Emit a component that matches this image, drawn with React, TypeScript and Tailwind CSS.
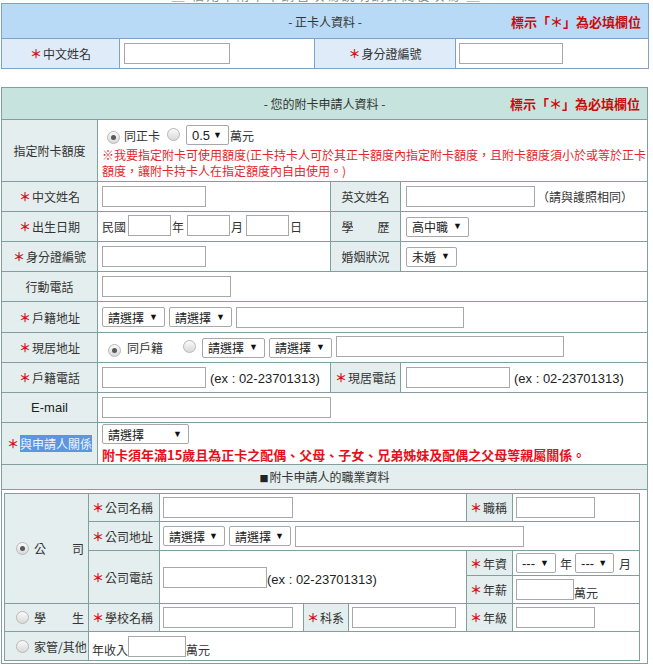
import React from "react";

const cjk = "font-['Noto_Sans_CJK_TC','Noto_Sans_CJK_SC',sans-serif]";
const lat = "font-['Liberation_Sans',Arial,sans-serif]";

function Star() {
  return <span className="text-[#d3141c] text-[12px] font-bold mr-[1px]">＊</span>;
}

function Box({ w }: { w: string }) {
  return <span className={`inline-block shrink-0 h-[21px] border border-[#a8a8a8] bg-white ${w}`} />;
}

function Sel({ label, w, latin }: { label: string; w: string; latin?: boolean }) {
  return (
    <span
      className={`inline-flex shrink-0 items-center justify-between h-[20px] border border-[#a8a8a8] rounded-[2px] bg-white pl-[5px] pr-[6px] text-[#222] ${latin ? `${lat} text-[13px]` : "text-[12px]"} ${w}`}
    >
      <span>{label}</span>
      <span className={`${lat} text-[9px] leading-none text-[#111]`}>▼</span>
    </span>
  );
}

function Radio({ on }: { on?: boolean }) {
  return (
    <span className="inline-flex shrink-0 items-center justify-center w-[13px] h-[13px] rounded-full border border-[#b8b8b8] bg-gradient-to-b from-[#fafafa] to-[#d9d9d9]">
      {on && <span className="w-[5px] h-[5px] rounded-full bg-[#585858]" />}
    </span>
  );
}

function Ex() {
  return <span className={`${lat} text-[13px] text-[#222]`}>(ex : 02-23701313)</span>;
}

const L2 = "border border-[#809f9d] bg-[#e4eeee] text-center p-0";
const C2 = "border border-[#809f9d] bg-white p-0";
const IL = "border border-[#809f9d] bg-[#e4eeee] p-0 pl-[3px] text-left whitespace-nowrap";
const IC = "border border-[#809f9d] bg-white p-0";

export default function App() {
  return (
    <div className={`w-[653px] h-[665px] overflow-hidden bg-white text-[#333] text-[12px] leading-[17px] ${cjk}`}>
      <div className="h-[3px] overflow-hidden flex justify-center">
        <div className="text-[13px] leading-[14px] text-[#888] -mt-[12px] tracking-[2px]">＿ 信用卡附卡申請書填寫說明請詳閱後填寫 ＿</div>
      </div>

      <table className="ml-[1px] w-[647px] table-fixed border-collapse">
        <colgroup>
          <col className="w-[118px]" />
          <col className="w-[195px]" />
          <col className="w-[141px]" />
          <col className="w-[193px]" />
        </colgroup>
        <tbody>
          <tr className="h-[35px]">
            <td colSpan={4} className="border border-[#7fa3c7] bg-[#b9daf6] p-0">
              <div className="grid grid-cols-[1fr_auto_1fr] items-center">
                <div />
                <div className="text-[#333]">- 正卡人資料 -</div>
                <div className="text-right pr-[7px] text-[13px] font-bold text-[#cc0a0a]">標示「＊」為必填欄位</div>
              </div>
            </td>
          </tr>
          <tr className="h-[30px]">
            <td className="border border-[#7fa3c7] bg-[#dfebf8] text-center p-0">
              <Star />中文姓名
            </td>
            <td className="border border-[#7fa3c7] bg-white p-0 pl-[4px]">
              <div className="flex items-center"><Box w="w-[106px]" /></div>
            </td>
            <td className="border border-[#7fa3c7] bg-[#dfebf8] text-center p-0">
              <Star />身分證編號
            </td>
            <td className="border border-[#7fa3c7] bg-white p-0 pl-[3px]">
              <div className="flex items-center"><Box w="w-[104px]" /></div>
            </td>
          </tr>
        </tbody>
      </table>

      <table className="mt-[18px] ml-[1px] w-[646px] table-fixed border-collapse">
        <colgroup>
          <col className="w-[96px]" />
          <col className="w-[233px]" />
          <col className="w-[70px]" />
          <col className="w-[247px]" />
        </colgroup>
        <tbody>
          <tr className="h-[32px]">
            <td colSpan={4} className="border border-[#809f9d] bg-[#c6e3dd] p-0">
              <div className="grid grid-cols-[1fr_auto_1fr] items-center">
                <div />
                <div className="text-[#333]">- 您的附卡申請人資料 -</div>
                <div className="text-right pr-[7px] text-[13px] font-bold text-[#cc0a0a]">標示「＊」為必填欄位</div>
              </div>
            </td>
          </tr>
          <tr className="h-[62px]">
            <td className={L2}>指定附卡額度</td>
            <td colSpan={3} className={`${C2} pl-[4px] pt-[2px]`}>
              <div className="flex items-center h-[22px]">
                <span className="ml-[5px]"><Radio on /></span>
                <span className="ml-[4px]">同正卡</span>
                <span className="ml-[7px]"><Radio /></span>
                <span className="ml-[6px]"><Sel label="0.5" w="w-[43px]" latin /></span>
                <span className="ml-[1px] text-[#333]">萬元</span>
              </div>
              <div className="text-[#e5262d] whitespace-nowrap leading-[16px] mt-[1px]">※我要指定附卡可使用額度(正卡持卡人可於其正卡額度內指定附卡額度，且附卡額度須小於或等於正卡</div>
              <div className="text-[#e5262d] whitespace-nowrap leading-[16px]">額度，讓附卡持卡人在指定額度內自由使用。)</div>
            </td>
          </tr>
          <tr className="h-[30px]">
            <td className={L2}><Star />中文姓名</td>
            <td className={`${C2} pl-[4px]`}><div className="flex items-center"><Box w="w-[104px]" /></div></td>
            <td className={L2}>英文姓名</td>
            <td className={`${C2} pl-[5px]`}>
              <div className="flex items-center"><Box w="w-[129px]" /><span className="ml-[2px]">（請與護照相同）</span></div>
            </td>
          </tr>
          <tr className="h-[30px]">
            <td className={L2}><Star />出生日期</td>
            <td className={`${C2} pl-[4px]`}>
              <div className="flex items-center">
                <span>民國</span><span className="ml-[2px]"><Box w="w-[43px]" /></span>
                <span className="ml-[1px]">年</span><span className="ml-[3px]"><Box w="w-[43px]" /></span>
                <span className="ml-[1px]">月</span><span className="ml-[3px]"><Box w="w-[43px]" /></span>
                <span className="ml-[1px]">日</span>
              </div>
            </td>
            <td className={L2}>學　　歷</td>
            <td className={`${C2} pl-[5px]`}><div className="flex items-center"><Sel label="高中職" w="w-[63px]" /></div></td>
          </tr>
          <tr className="h-[30px]">
            <td className={L2}><Star />身分證編號</td>
            <td className={`${C2} pl-[4px]`}><div className="flex items-center"><Box w="w-[104px]" /></div></td>
            <td className={L2}>婚姻狀況</td>
            <td className={`${C2} pl-[5px]`}><div className="flex items-center"><Sel label="未婚" w="w-[51px]" /></div></td>
          </tr>
          <tr className="h-[30px]">
            <td className={L2}>行動電話</td>
            <td colSpan={3} className={`${C2} pl-[4px]`}><div className="flex items-center"><Box w="w-[129px]" /></div></td>
          </tr>
          <tr className="h-[31px]">
            <td className={L2}><Star />戶籍地址</td>
            <td colSpan={3} className={`${C2} pl-[4px]`}>
              <div className="flex items-center gap-[4px]">
                <Sel label="請選擇" w="w-[63px]" />
                <Sel label="請選擇" w="w-[63px]" />
                <Box w="w-[228px]" />
              </div>
            </td>
          </tr>
          <tr className="h-[30px]">
            <td className={L2}><Star />現居地址</td>
            <td colSpan={3} className={`${C2} pl-[4px]`}>
              <div className="flex items-center">
                <span className="ml-[6px]"><Radio on /></span>
                <span className="ml-[6px]">同戶籍</span>
                <span className="ml-[20px]"><Radio /></span>
                <span className="ml-[6px]"><Sel label="請選擇" w="w-[63px]" /></span>
                <span className="ml-[4px]"><Sel label="請選擇" w="w-[63px]" /></span>
                <span className="ml-[4px]"><Box w="w-[228px]" /></span>
              </div>
            </td>
          </tr>
          <tr className="h-[30px]">
            <td className={L2}><Star />戶籍電話</td>
            <td className={`${C2} pl-[4px]`}><div className="flex items-center"><Box w="w-[104px]" /><span className="ml-[4px]"><Ex /></span></div></td>
            <td className={L2}><Star />現居電話</td>
            <td className={`${C2} pl-[5px]`}><div className="flex items-center"><Box w="w-[104px]" /><span className="ml-[4px]"><Ex /></span></div></td>
          </tr>
          <tr className="h-[30px]">
            <td className={`${L2} ${lat} text-[13px] text-[#222]`}>E-mail</td>
            <td colSpan={3} className={`${C2} pl-[4px]`}><div className="flex items-center"><Box w="w-[229px]" /></div></td>
          </tr>
          <tr className="h-[42px]">
            <td className={`${L2} whitespace-nowrap`}>
              <Star /><span className="bg-[#5a97e0] text-[#eef4ff]">與申請人關係</span>
            </td>
            <td colSpan={3} className={`${C2} pl-[4px]`}>
              <div className="flex items-center"><Sel label="請選擇" w="w-[87px]" /></div>
              <div className="text-[#e5101b] text-[13px] font-bold leading-[17px] mt-[2px] whitespace-nowrap">附卡須年滿15歲且為正卡之配偶、父母、子女、兄弟姊妹及配偶之父母等親屬關係。</div>
            </td>
          </tr>
          <tr className="h-[25px]">
            <td colSpan={4} className={L2}>
              <span className="text-[9px] mr-[1px] text-[#222]">■</span>附卡申請人的職業資料
            </td>
          </tr>
          <tr>
            <td colSpan={4} className={`${C2} pl-[2px] pt-[3px] pr-[6px] pb-[2px]`}>
              <table className="w-[635px] table-fixed border-collapse">
                <colgroup>
                  <col className="w-[84px]" />
                  <col className="w-[71px]" />
                  <col className="w-[144px]" />
                  <col className="w-[45px]" />
                  <col className="w-[118px]" />
                  <col className="w-[46px]" />
                  <col className="w-[127px]" />
                </colgroup>
                <tbody>
                  <tr className="h-[28px]">
                    <td rowSpan={4} className="border border-[#809f9d] bg-[#e4eeee] p-0">
                      <div className="flex items-center pl-[11px]">
                        <Radio on />
                        <span className="ml-[5px] w-[50px] flex justify-between"><span>公</span><span>司</span></span>
                      </div>
                    </td>
                    <td className={IL}><Star />公司名稱</td>
                    <td colSpan={3} className={`${IC} pl-[3px]`}><div className="flex items-center"><Box w="w-[130px]" /></div></td>
                    <td className={IL}><Star />職稱</td>
                    <td className={`${IC} pl-[3px]`}><div className="flex items-center"><Box w="w-[79px]" /></div></td>
                  </tr>
                  <tr className="h-[29px]">
                    <td className={IL}><Star />公司地址</td>
                    <td colSpan={5} className={`${IC} pl-[3px]`}>
                      <div className="flex items-center gap-[4px]">
                        <Sel label="請選擇" w="w-[62px]" />
                        <Sel label="請選擇" w="w-[62px]" />
                        <Box w="w-[229px]" />
                      </div>
                    </td>
                  </tr>
                  <tr className="h-[25px]">
                    <td rowSpan={2} className={IL}><Star />公司電話</td>
                    <td rowSpan={2} colSpan={3} className={`${IC} pl-[3px]`}>
                      <div className="flex items-end"><Box w="w-[104px]" /><Ex /></div>
                    </td>
                    <td className={IL}><Star />年資</td>
                    <td className={`${IC} pl-[3px]`}>
                      <div className="flex items-center">
                        <Sel label="---" w="w-[40px]" latin />
                        <span className="ml-[4px]">年</span>
                        <span className="ml-[3px]"><Sel label="---" w="w-[39px]" latin /></span>
                        <span className="ml-[5px]">月</span>
                      </div>
                    </td>
                  </tr>
                  <tr className="h-[28px]">
                    <td className={IL}><Star />年薪</td>
                    <td className={`${IC} pl-[3px]`}>
                      <div className="flex items-end"><Box w="w-[58px]" /><span className="leading-[15px]">萬元</span></div>
                    </td>
                  </tr>
                  <tr className="h-[28px]">
                    <td className="border border-[#809f9d] bg-[#e4eeee] p-0">
                      <div className="flex items-center pl-[11px]">
                        <Radio />
                        <span className="ml-[5px] w-[50px] flex justify-between"><span>學</span><span>生</span></span>
                      </div>
                    </td>
                    <td className={IL}><Star />學校名稱</td>
                    <td className={`${IC} pl-[3px]`}><div className="flex items-center"><Box w="w-[130px]" /></div></td>
                    <td className={IL}><Star />科系</td>
                    <td className={`${IC} pl-[3px]`}><div className="flex items-center"><Box w="w-[104px]" /></div></td>
                    <td className={IL}><Star />年級</td>
                    <td className={`${IC} pl-[3px]`}><div className="flex items-center"><Box w="w-[79px]" /></div></td>
                  </tr>
                  <tr className="h-[29px]">
                    <td className="border border-[#809f9d] bg-[#e4eeee] p-0">
                      <div className="flex items-center pl-[11px]">
                        <Radio />
                        <span className="ml-[5px]">家管/其他</span>
                      </div>
                    </td>
                    <td colSpan={6} className={`${IC} pl-[3px]`}>
                      <div className="flex items-end"><span className="leading-[15px]">年收入</span><Box w="w-[58px]" /><span className="leading-[15px]">萬元</span></div>
                    </td>
                  </tr>
                </tbody>
              </table>
            </td>
          </tr>
        </tbody>
      </table>
    </div>
  );
}
